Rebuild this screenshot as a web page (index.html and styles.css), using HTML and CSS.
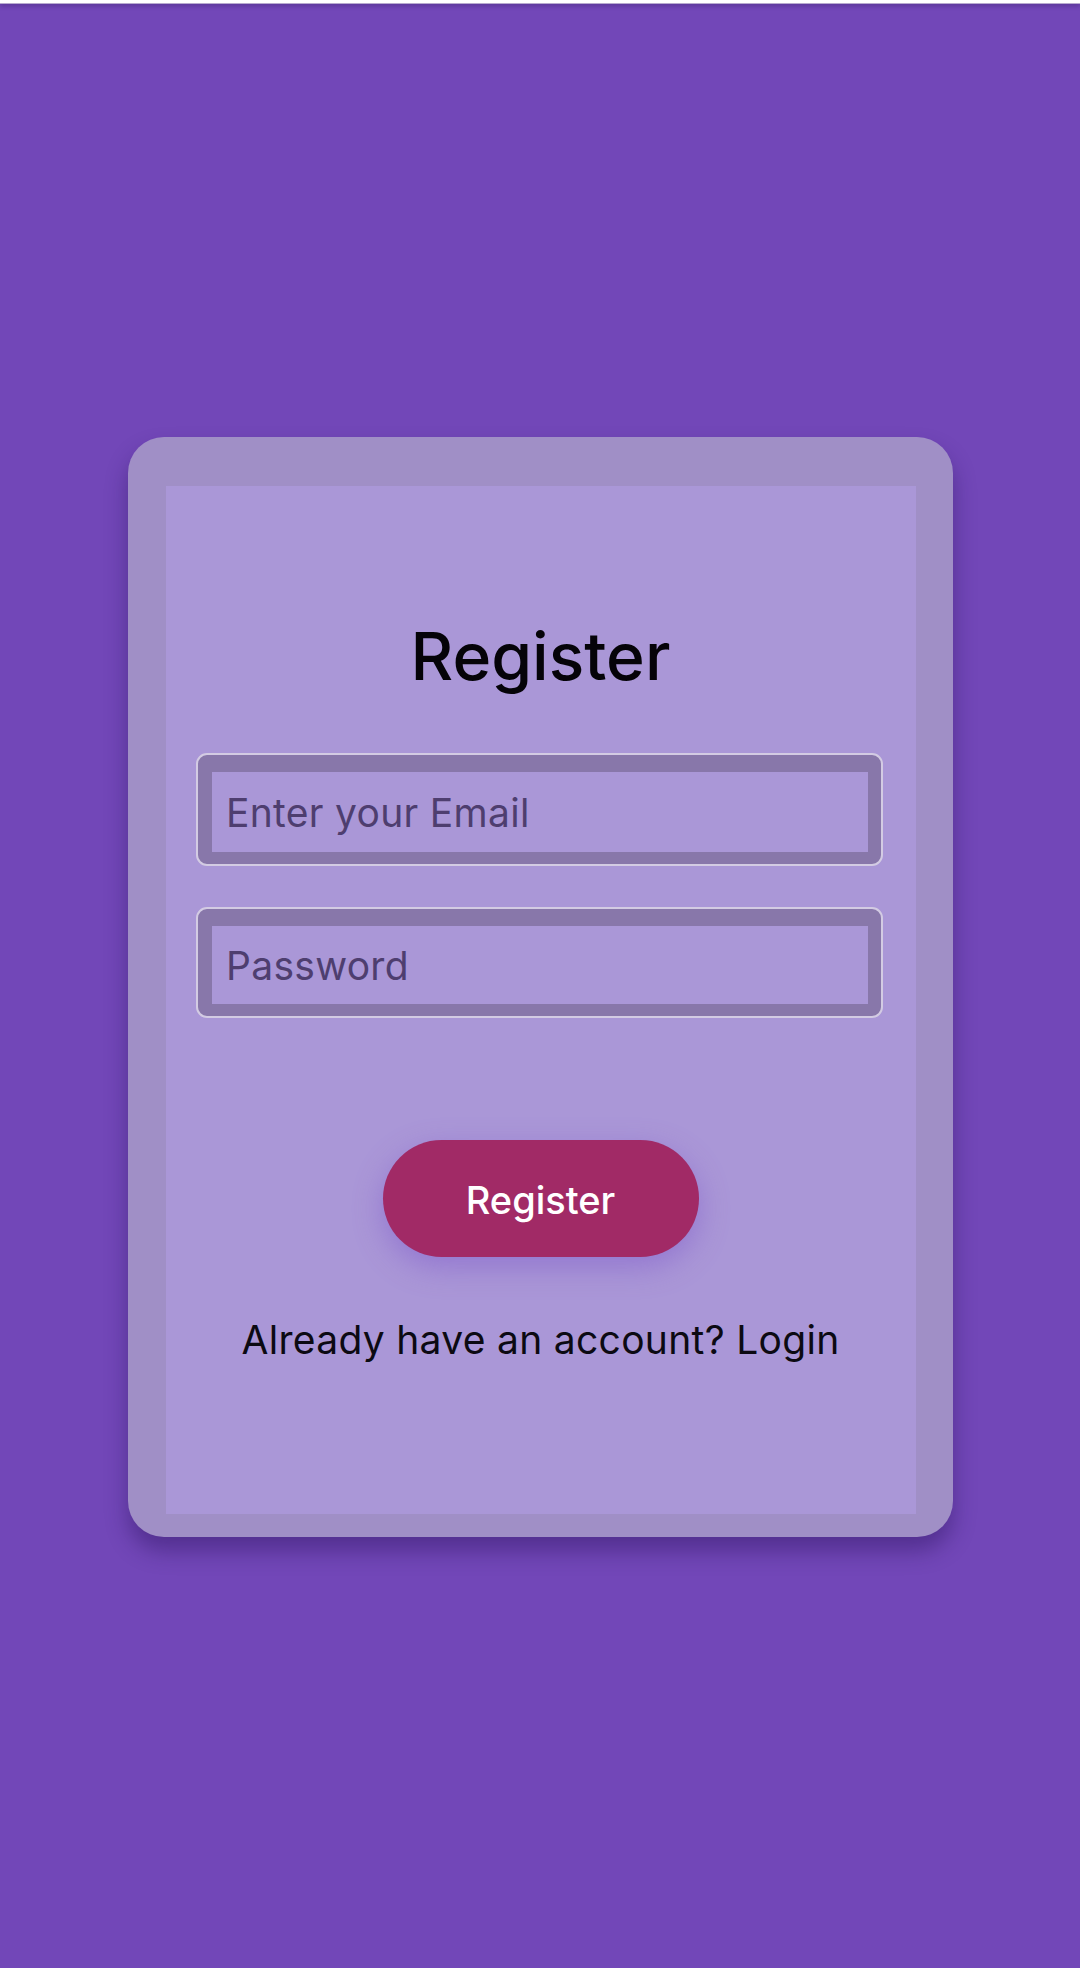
FILE: index.html
```html
<!DOCTYPE html>
<html lang="en">
<head>
<meta charset="utf-8">
<title>Register</title>
<link rel="stylesheet" href="styles.css">
</head>
<body>
<div class="topbar"></div>
<main class="page">
  <div class="card">
    <form class="form">
      <h1 class="title">Register</h1>
      <div class="field"><div class="field-inner"><span class="placeholder">Enter your Email</span></div></div>
      <div class="field field-second"><div class="field-inner"><span class="placeholder">Password</span></div></div>
      <div class="btn-row"><div class="btn">Register</div></div>
      <p class="switch">Already have an account? Login</p>
    </form>
  </div>
</main>
</body>
</html>
```
FILE: styles.css
```css
html, body {
  margin: 0;
  padding: 0;
}
body {
  width: 1080px;
  height: 1968px;
  background: #7247b8;
  font-family: Inter, "Noto Sans", sans-serif;
  overflow: hidden;
}
.topbar {
  height: 3px;
  background: #ffffff;
  border-bottom: 1px solid #b7a9cf;
  box-shadow: 0 2px 4px rgba(40, 20, 80, 0.35);
  position: relative;
  z-index: 1;
}
.page {
  height: 1964px;
  display: flex;
  align-items: center;
  justify-content: center;
}
.card {
  width: 825px;
  height: 1100px;
  box-sizing: border-box;
  padding: 49px 37px 23px 38px;
  background: #a08fc6;
  border-radius: 36px;
  box-shadow: 0 14px 22px rgba(45, 20, 95, 0.45);
  margin-top: 2px;
}
.form {
  height: 100%;
  background: #aa97d7;
  display: flex;
  flex-direction: column;
  align-items: center;
  margin: 0;
}
.title {
  margin: 130px 0 0;
  font-size: 66px;
  line-height: 80px;
  font-weight: 500;
  color: #050308;
  height: 80px;
}
.field {
  margin-top: 57px;
  width: 687px;
  height: 113px;
  box-sizing: border-box;
  border: 2px solid #d3cbe3;
  border-radius: 11px;
  background: #8877aa;
  padding: 17px 13px 12px 14px;
  margin-left: -2px;
}
.field-second {
  margin-top: 41px;
  height: 111px;
}
.field-inner {
  height: 100%;
  background: #aa97d7;
  display: flex;
  align-items: center;
  padding-left: 14px;
}
.placeholder {
  font-size: 39px;
  letter-spacing: 0.3px;
  color: #4e3e6f;
  line-height: 1;
  padding-top: 1px;
}
.btn-row {
  margin-top: 122px;
}
.btn {
  width: 316px;
  height: 117px;
  border-radius: 59px;
  background: #a12a66;
  color: #ffffff;
  font-size: 38px;
  font-weight: 500;
  display: flex;
  align-items: center;
  justify-content: center;
  padding-top: 2px;
  box-sizing: border-box;
  box-shadow: 0 10px 30px rgba(120, 80, 200, 0.45);
}
.switch {
  margin: 60px 0 0;
  font-size: 39px;
  letter-spacing: 0.3px;
  line-height: 46px;
  color: #0c0a12;
}
```
